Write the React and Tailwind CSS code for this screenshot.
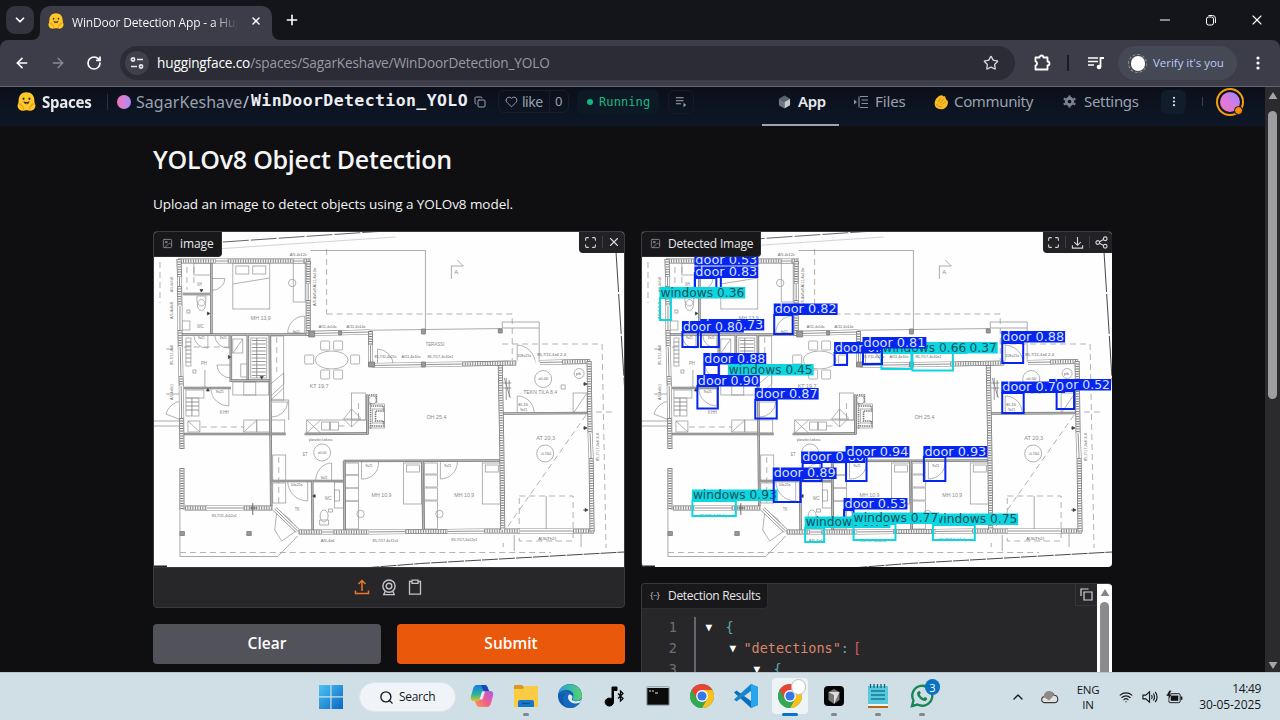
import React from "react";
import {
  ArrowLeft, ArrowRight, RotateCw, ChevronDown, ChevronUp, Plus, X, Minus, Star, Copy, Heart,
  Search, Wifi, Volume2, Share2, Maximize, Image as ImageIcon,
} from "lucide-react";

function Hugging({ className }) {
  return (
    <svg viewBox="0 0 20 20" className={className}>
      <path d="M10 .3c5.200 0 8.300 3.600 8.300 8.600 0 1.500.2 3.200 1 4.600.6 2.500-1.300 6.200-5 6.200-2 0-3-.5-4.300-.5s-2.300.5-4.300.5c-3.700 0-5.600-3.700-5-6.200.8-1.400 1-3.100 1-4.600C1.700 3.900 4.800.3 10 .3z" fill="#ffc927" />
      <path d="M1.500 12.500c2.500 0 5 2.500 5.500 6M18.500 12.500c-2.500 0-5 2.500-5.500 6M3.500 12l1.500 3M16.500 12l-1.500 3" stroke="#f39a1e" strokeWidth="1.300" fill="none" />
      <ellipse cx="6.900" cy="7.200" rx="1.100" ry="1.300" fill="#3b3a44" />
      <ellipse cx="13.100" cy="7.200" rx="1.100" ry="1.300" fill="#3b3a44" />
      <path d="M6.800 9.700q3.200 1.600 6.400 0q-.5 3.200-3.200 3.200t-3.200-3.200z" fill="#3b3a44" />
      <path d="M8.700 12.100q1.300-1 2.600 0l-1.300.7z" fill="#ef4e4e" />
    </svg>
  );
}

function Wall({ x1, y1, x2, y2, w = 5 }) {
  const p = { x1, y1, x2, y2 };
  return (
    <g>
      <line {...p} stroke="#777" strokeWidth={w} />
      <line {...p} stroke="#f4f4f4" strokeWidth={w - 1.6} />
      <line {...p} stroke="#7d7d7d" strokeWidth={w - 1.6} strokeDasharray="0.9 1.6" />
    </g>
  );
}
function Thin({ x1, y1, x2, y2, w = 2.6 }) {
  const p = { x1, y1, x2, y2 };
  return (
    <g>
      <line {...p} stroke="#777" strokeWidth={w} />
      <line {...p} stroke="#bbb" strokeWidth={w - 1.4} />
    </g>
  );
}
function Pane({ x1, y1, x2, y2 }) {
  const p = { x1, y1, x2, y2 };
  return (
    <g>
      <line {...p} stroke="#888" strokeWidth="5" />
      <line {...p} stroke="#fff" strokeWidth="3.800" />
      <line {...p} stroke="#888" strokeWidth="0.900" />
    </g>
  );
}

const walls = [
  [177, 261, 215, 261], [227, 261, 293, 261], [303, 261, 310, 261], [178, 259, 178.6, 277], [178.600, 286, 179, 306],
  [179, 330, 179.300, 347], [180, 376, 180.300, 386], [180.700, 418, 181, 449], [181, 468, 181, 510], [307.500, 261, 307.500, 284], [307.500, 300, 307.500, 336],
  [184, 508, 206, 508], [243, 508, 272, 508], [298, 532, 321, 532], [333, 532, 368, 532], [405, 531.5, 447, 531.5],
  [484, 531, 519, 531], [573, 531, 594, 531], [500, 365, 501.500, 445], [501.500, 445, 502.500, 530], [462, 364, 516, 363],
  [562, 362, 590, 361.5], [589, 361, 590, 433], [591, 458, 592, 532], [370, 331, 370, 345],
];
const panes = [
  [215, 261, 227, 261], [293, 261, 303, 261], [178.600, 277, 178.600, 286], [179, 306, 179, 330], [179.300, 347, 180, 376], [180.300, 386, 180.700, 418],
  [307.500, 284, 307.500, 300], [313, 333.5, 369, 332], [370, 345, 370, 366], [372, 365.500, 462, 364], [540, 362.5, 562, 362],
  [206, 508, 243, 508], [321, 532, 333, 532], [368, 532, 405, 531.5], [447, 531.5, 484, 531], [519, 531, 573, 531], [590, 433, 591, 458], [274, 509, 297, 531],
];
const thins = [
  [210.500, 263, 210.500, 334], [182, 294, 210, 294], [181, 334.500, 309, 334.500], [230, 335, 230, 382], [247, 335, 247, 380], [230, 380.500, 269, 380.500],
  [269, 335, 270.500, 506], [183, 388, 230, 388], [183, 434, 285, 434], [304, 434, 368, 433.500], [367, 395, 367, 434], [343, 461, 500, 460.500],
  [343.500, 461, 344, 530], [422, 461, 423, 530], [270, 481, 343, 481], [311.500, 481, 312, 530], [503, 413.500, 588, 413],
];
const rects = [
  [232, 263, 37, 46], [235, 266, 13, 8], [252, 266, 13, 8], [193, 263, 17, 12], [292.500, 263, 12, 39],
  [232, 339, 10, 14], [240, 364, 7, 13], [185, 338, 5, 28], [250, 338, 16, 40], [232, 382, 36, 13], [243, 382, 12, 13],
  [270, 336, 13, 64], [185, 390, 18, 8], [185, 398, 13, 18], [187, 421, 12, 11], [243, 420, 13, 12], [256, 420, 13, 12], [270, 420, 14, 13],
  [306, 420, 60, 13], [321, 422, 8, 8], [330, 422, 8, 8], [272, 455, 13, 26], [272, 483, 13, 20], [345, 463, 13, 12], [345, 475, 13, 13], [345, 488, 13, 13], [345, 501, 13, 28],
  [424, 463, 13, 11], [424, 475, 13, 12], [424, 488, 13, 12], [424, 501, 13, 28], [403, 463, 18, 41], [406, 465, 13, 7], [482, 463, 18, 41], [485, 465, 13, 7],
  [368, 404, 16, 24], [372, 409, 12, 14], [334, 482, 9, 26], [334, 490, 5, 11], [573, 393, 14, 20], [351, 393, 14, 27], [186, 310, 3, 3], [192, 370, 3, 3],
  [328, 509, 4, 3], [561, 385, 4, 4], [181, 321, 8, 9],
];
const chairs = [[320, 341], [333, 341], [304, 355], [350, 355], [320, 370], [333, 370]];
const arcs = [
  "M211 290.500A14 12 0 0 0 224 278.500H211", "M304 316A17 17 0 0 0 287 333H304V316", "M193 336A13 13 0 0 0 207 348V335", "M214 336A13 13 0 0 0 228 348V335",
  "M230 365H216A14 14 0 0 0 230 378z", "M210 389A18 18 0 0 0 228 406V389", "M271 402H287A16 16 0 0 1 271 417", "M377 366V349A17 17 0 0 1 393 365", "M517 363V345A19 19 0 0 1 535 363",
  "M315 481A16 18 0 0 1 331 463V481", "M287 482A20 20 0 0 0 307 501V482", "M361 462V479A16 16 0 0 0 378 462", "M440 462V479A17 17 0 0 0 457 462", "M276 512L274 530L281 541L294 532A24 20 0 0 0 276 512",
  "M517 413V396A17 17 0 0 1 534 413", "M574 412L587 393", "M180 401A18 18 0 0 0 165 414L180 420",
];
const labels = [
  ["MH 13,9", 250, 320, 20], ["TERASSI", 425, 346, 19], ["KT 19,7", 309, 388, 19], ["OH 25,4", 426, 419.500, 20], ["AT 20,3", 536, 440, 19], ["ET", 302, 456, 5],
  ["TK", 294, 511, 5], ["WC", 324, 500, 7], ["WC", 196, 328, 7], ["PH", 200, 365, 6], ["WH", 196, 286, 5], ["KHH", 219, 414, 9], ["MH 10,9", 371, 497, 20], ["MH 10,9", 454, 497, 20], ["TEKN TILA  8,4", 523, 394, 34], ["A", 454, 274, 4],
];
const tiny = [
  ["A/5.4x12x", 289, 256, 17], ["A/11,4x14x", 318, 328, 18], ["A/11,4x14x", 346, 328, 19], ["85,7/11,4x21x", 374, 358, 22], ["A/11,4x10x", 401, 358, 19], ["85,7/17,4x10x1", 427, 358, 26],
  ["108x21x", 517, 357, 14], ["85,7/11,4x6 2-4", 537, 356, 29], ["85,7/11,4x12x1", 211, 517, 25], ["A/5,4x6", 320, 542, 14], ["85,7/17,4x12x1", 372, 542, 26], ["85,7/17,4x12x1", 451, 541, 26], ["A(30Th2)", 538, 540, 18],
  ["9x21", 197, 339, 7], ["9x21", 219, 339, 7], ["9x21", 215, 393, 8], ["9x21", 292, 333, 7], ["9x21", 320, 479, 7], ["9x21", 365, 467, 7], ["9x21", 444, 467, 7], ["10x21x", 290, 486, 12], ["EI-15", 518, 406, 10], ["9x21", 520, 411, 7], ["±0.00", 317, 454, 9], ["±0.00", 538, 380, 10], ["-0.150", 540, 455, 11], ["pk", 576, 375, 5], ["ylänurkin korkeus", 308, 441.500, 24],
];
const vert = [["A/5.4x6x8", 172, 292, 15], ["A/5.4x6x8", 172, 319, 17], ["85.7/11,4x6", 172, 365, 20], ["A/5.4x6x1", 172, 400, 16], ["A/5.4x6x8 A/11.4x12x", 315, 306, 38], ["85,7/17,4x6 2-4", 599, 461, 28]];
const dashes = [
  "M326 249V314M326 314H512V360", "M502 344H602L606 548", "M179 552.500H551", "M186 267V290M193 267V285", "M159 262V303", "M183 347H230", "M276 337V372", "M200 427H243", "M338 426H345", "M278 457V503",
  "M586 415L505 530", "M519 496H573V541H519z", "M596 412H612", "M503 543V547", "M358 403V420",
];

function FloorPlan() {
  return (
    <g fill="none" stroke="#999" strokeWidth="0.750">
      <rect x="153" y="232" width="472" height="336" fill="#fefefe" stroke="none" />
      <path d="M215 249L395 237" stroke="#c4c4c4" />
      <path d="M310 250.500H425V331M311 331L502 328.500M502 328V322H539V362M502 328H539M451 279V266H463L457 260M179 510V556.500H277L297 536M165 349h6M165 394H180M153 421H181M153 426H181M546 496V530M514 535V551M581 534V547M204 370V388M270 400h18V420" stroke="#909090" />
      <path d="M222 242L385 231" stroke="#555" strokeWidth="0.900" strokeDasharray="26 2" />
      <path d="M616 252L624.500 386" stroke="#333" strokeWidth="0.900" strokeDasharray="40 2" />
      <path d="M363 568L420 563.500L624 552" stroke="#333" strokeWidth="0.900" strokeDasharray="16 1" />
      <path d="M153 565.500H166V567.500H153z" fill="#222" stroke="none" />
      {dashes.map((d, i) => <path key={i} d={d} strokeDasharray="6 4" />)}
      {rects.map((r, i) => <rect key={i} x={r[0]} y={r[1]} width={r[2]} height={r[3]} />)}
      {chairs.map((c, i) => <rect key={i} x={c[0]} y={c[1]} width="9" height="9" rx="1" />)}
      <ellipse cx="331" cy="360" rx="16.500" ry="9" fill="#fefefe" />
      <circle cx="291.500" cy="283" r="3.700" />
      <path d="M232 284L269 278M196 296h9v4a4.500 6 0 0 1-9 0z" />
      <ellipse cx="200.500" cy="305" rx="4" ry="5.500" />
      <ellipse cx="323.500" cy="516" rx="4" ry="6" /><path d="M319 520h9v5h-9z" />
      <circle cx="321.500" cy="452.500" r="8.500" /><circle cx="543" cy="379" r="8.500" /><circle cx="545" cy="453.500" r="8.500" /><circle cx="579" cy="373.500" r="5" />
      <circle cx="360" cy="514" r="3.700" /><circle cx="439" cy="514" r="3.700" /><circle cx="372" cy="400" r="4" />
      <path d="M343 419L351 409L360 418L351 427zM351 409V427M343 419H360M187 421L199 432M243 432L256 420M232 353L242 339M270 384L283 373V384L270 396M270 400L283 388M306 420L320 433M306 433L320 420" />
      <path d="M251 340.500H265M251 344H265M251 347.500H265M251 351H265M251 354.500H265M251 358H265M251 361.500H265M251 365H265M251 368.500H265M251 372H265M251 375.500H265M256 338V378M185 342h5M185 346h5M185 350h5M185 354h5M185 358h5M185 362h5M185 402h13M185 406h13M185 410h13M191 398v18M504 378l6 20M506 378v22M509 380v17M503 388h8M503 383h8" stroke="#777" />
      <path d="M370 403V429M370 406H383V411H375V421H383V426H370M366 395h10v8" stroke="#777" strokeWidth="1.600" strokeDasharray="1.400 .8" />
      {arcs.map((d, i) => <path key={i} d={d} />)}
      {thins.map((w, i) => <Thin key={i} x1={w[0]} y1={w[1]} x2={w[2]} y2={w[3]} />)}
      {panes.map((w, i) => <Pane key={i} x1={w[0]} y1={w[1]} x2={w[2]} y2={w[3]} />)}
      {walls.map((w, i) => <Wall key={i} x1={w[0]} y1={w[1]} x2={w[2]} y2={w[3]} />)}
      <path d="M517 363H535" stroke="#fff" strokeWidth="5" />
      <path d="M421 329h4v5h-4zM498 329h4v4h-4zM179 531.500h4.500v4h-4.500zM246 531.500h4.500v4h-4.500zM308 331h6v6h-6zM338 331h3v4h-3zM368 362h6v5h-6zM421 362h4v5h-4z" fill="#999" stroke="#777" />
      <path d="M209 313.500l-2.500-1.500v3zM230 357l-2.500-1.500v3zM200.500 292l-1.500-2.500h3zM207 388.500l-1.500 2.500h3zM261 379l-1.500-2.500h3zM587 384l-3-1.500v3zM587 428l-3-1.500v3zM588 510l-3-1.500v3zM312 496l2.500 1.500v-3zM252 503v12M249 508h7M583 384h3M583 428h3M583 510h4" fill="#333" stroke="#444" />
      <g fill="#8a8a8a" stroke="none" fontFamily="'Liberation Sans', sans-serif" fontSize="6.200">
        {labels.map(([t, x, y, w], i) => <text key={i} x={x} y={y} textLength={w} lengthAdjust="spacingAndGlyphs">{t}</text>)}
      </g>
      <g fill="#666" stroke="none" fontFamily="'Liberation Sans', sans-serif" fontSize="4.200">
        {tiny.map(([t, x, y, w], i) => <text key={i} x={x} y={y} textLength={w} lengthAdjust="spacingAndGlyphs">{t}</text>)}
        {vert.map(([t, x, y, w], i) => <text key={i} transform={`translate(${x} ${y}) rotate(-90)`} textLength={w} lengthAdjust="spacingAndGlyphs">{t}</text>)}
      </g>
    </g>
  );
}

const B = "#0625ee";
const C = "#0cd6e0";
/* kind, label, label x, label y, label width, then box x1 y1 x2 y2 */
const detections = [
  ["d", "door 0.53", 694.5, 254, 64, 695, 273, 721, 292],
  ["d", "door 0.83", 694.5, 266.5, 64, 695, 278, 716.5, 292],
  ["w", "windows 0.36", 659.5, 287, 86, 660, 298, 671, 320],
  ["d", "door 0.82", 774, 303.5, 64, 774.5, 315, 793, 334],
  ["d", "door 0.73", 700.5, 319, 64, 701, 332, 719, 347],
  ["d", "door 0.80", 682, 321, 62, 682.5, 332, 698, 347],
  ["d", "door 0.88", 703.5, 353, 63, 704.5, 365, 719, 375],
  ["w", "windows 0.45", 728, 364, 86, 0, 0, 0, 0],
  ["d", "door 0.90", 697, 375, 63, 697.5, 386, 718, 408.5],
  ["d", "door 0.87", 755, 388, 64, 755.5, 400, 777, 418.5],
  ["d", "door 0.84", 834.5, 342, 62, 835, 353, 847.5, 365],
  ["w", "windows 0.37", 912.5, 342, 86, 913, 353, 953.5, 370.5],
  ["w", "windows 0.66", 882, 342.5, 86, 882, 353, 912, 369],
  ["d", "door 0.81", 863, 337, 64, 863.5, 349, 882.5, 364],
  ["d", "door 0.88", 1002, 331, 64, 1003, 343, 1024, 363],
  ["d", "door 0.52", 1050, 379, 62, 1057.5, 391, 1075, 409],
  ["d", "door 0.70", 1002, 381.5, 64, 1003, 393, 1024.5, 413],
  ["w", "windows 0.93", 692, 489.5, 86, 692.5, 501, 736, 516],
  ["d", "door 0.86", 801.5, 451.5, 64, 803, 463, 822, 481],
  ["d", "door 0.89", 773, 467.5, 64, 774, 480, 801, 502],
  ["d", "door 0.94", 846, 446, 64, 846.5, 457, 867, 481],
  ["d", "door 0.93", 924, 446, 64, 924.5, 457, 946, 481],
  ["d", "door 0.53", 844, 498, 64, 844.5, 510, 854, 519],
  ["w", "windows 0.78", 805, 516.5, 86, 805.5, 528, 824.5, 542],
  ["w", "windows 0.75", 933, 513.5, 86, 933.5, 525, 975.5, 540],
  ["w", "windows 0.77", 853, 512.5, 87, 854, 524, 896, 540],
];

function Detections() {
  return (
    <g transform="translate(-489 0)" fontFamily="'DejaVu Sans', sans-serif" fontSize="11.800">
      {detections.map(([k, t, x, y, w, a, b, c, d], i) => (
        <g key={i}>
          {c > 0 && <rect x={a} y={b} width={c - a} height={d - b} fill="none" stroke={k === "d" ? B : C} strokeWidth="2" />}
          <rect x={x} y={y} width={w} height="11.500" fill={k === "d" ? B : C} />
          <text x={x + 1} y={y + 9.6} textLength={w - 2} lengthAdjust="spacingAndGlyphs" fill={k === "d" ? "#d8e0ff" : "#17505a"}>{t}</text>
        </g>
      ))}
    </g>
  );
}

function PlanImage({ detected }) {
  return (
    <svg viewBox="153 232 471 335" className="block h-[335px] w-full" preserveAspectRatio="none">
      <FloorPlan />
      {detected && <Detections />}
    </svg>
  );
}

function PanelLabel({ children }) {
  return (
    <div className="absolute left-0 top-0 flex h-[25px] items-center gap-[7px] rounded-br-sm border-b border-r border-[#2c2c31] bg-[#18181b] pl-[8px] pr-[7px] text-[12px] text-[#e8e8ea]">
      {children}
    </div>
  );
}

function Chrome({ className }) {
  return (
    <svg viewBox="0 0 24 24" className={className}>
      <circle cx="12" cy="12" r="12" fill="#34a853" />
      <path d="M12 12L1.610 6A12 12 0 0 1 22.390 6L12 6z" fill="#ea4335" />
      <path d="M12 6H22.390A12 12 0 0 1 12 24L17.200 15z" fill="#fbc11a" />
      <path d="M1.610 6L6.800 15L12 18L12 6z" fill="#ea4335" /><path d="M1.610 6L6.800 15A6 6 0 0 0 15.500 16.800L12 24A12 12 0 0 1 1.610 6z" fill="#34a853" />
      <circle cx="12" cy="12" r="5.900" fill="#fff" /><circle cx="12" cy="12" r="4.600" fill="#3377e8" />
    </svg>
  );
}

function TaskItem({ children, active, running }) {
  return (
    <div className="flex h-12 w-11 flex-col items-center">
      <div className={active ? "mt-[5px] flex h-9 w-9 items-center justify-center rounded bg-[#eef3f6]" : "mt-[5px] flex h-9 w-9 items-center justify-center"}>{children}</div>
      {active ? <div className="-mt-[1px] h-[3px] w-4 rounded-full bg-[#0a74c9]" /> : running ? <div className="-mt-px h-[3px] w-[6px] rounded-full bg-[#7e878d]" /> : null}
    </div>
  );
}

function Taskbar() {
  return (
    <div className="flex h-12 w-full border-t border-[#b9c5cb] bg-[#d0dfe6] pl-[317px] font-['Open_Sans',sans-serif] text-[#17191b]">
      <div className="flex h-12 w-7 items-center justify-center">
        <svg viewBox="0 0 24 24" className="h-6 w-6">
          <defs><linearGradient id="win" x1="0" y1="0" x2="1" y2="1"><stop offset="0" stopColor="#4cc4f5" /><stop offset="1" stopColor="#0a66c2" /></linearGradient></defs>
          <path d="M0 0H11.300V11.300H0zM12.500 0H24V11.300H12.500zM0 12.500H11.300V24H0zM12.500 12.500H24V24H12.500z" fill="url(#win)" />
        </svg>
      </div>
      <div className="ml-[14px] mr-1 mt-[9px] flex h-[30px] w-[97px] items-center rounded-full border border-[#dde5ea] bg-[#f0f4f8] pl-[19px]">
        <Search className="h-[15px] w-[15px]" strokeWidth={2.2} />
        <span className="ml-[5px] text-[12px] tracking-[-0.3px]">Search</span>
      </div>
      <TaskItem>
        <svg viewBox="0 0 24 24" className="h-6 w-6">
          <defs>
            <linearGradient id="cp1" x1="0" y1="0" x2="0" y2="1"><stop offset="0" stopColor="#1878e0" /><stop offset=".6" stopColor="#2bb59b" /><stop offset="1" stopColor="#e6c21c" /></linearGradient>
            <linearGradient id="cp2" x1="1" y1="0" x2="0" y2="1"><stop offset="0" stopColor="#a85bea" /><stop offset=".5" stopColor="#ee5c92" /><stop offset="1" stopColor="#fb9a4c" /></linearGradient>
          </defs>
          <path d="M7 1H15Q17 1 18 4L19 7H16Q14 7 13 10L11 17H4Q0 17 1 12L3 5Q4 1 7 1zM10 7L8 14" fill="url(#cp1)" />
          <path d="M17 23H9Q7 23 6 20L5 17H8Q10 17 11 14L13 7H20Q24 7 23 12L21 19Q20 23 17 23z" fill="url(#cp2)" />
          <path d="M9.500 15.500L12 7.500H15L12.500 15.500z" fill="#e5e8ef" />
          <path d="M11 1H15Q17 1 18 5L19 7H15Q13 7 12 3z" fill="#1647b8" />
        </svg>
      </TaskItem>
      <TaskItem running>
        <svg viewBox="0 0 24 24" className="h-6 w-6"><path d="M0 2q0-1 1-1h7l2 2v5H0z" fill="#d99a1d" /><path d="M0 5h9l2-3h12q1 0 1 1v20H0z" fill="#fbcb44" /><path d="M4 23v-5q0-2 2-2h12q2 0 2 2v5z" fill="#1777cc" /><path d="M8 19.500h8" stroke="#0b4f96" strokeWidth="1.200" /></svg>
      </TaskItem>
      <TaskItem>
        <svg viewBox="0 0 24 24" className="h-6 w-6">
          <defs><linearGradient id="ed" x1="0" y1="0" x2="1" y2="0"><stop offset="0" stopColor="#229fe0" /><stop offset="1" stopColor="#57d46b" /></linearGradient></defs>
          <circle cx="12" cy="12" r="12" fill="#0f5cac" />
          <path d="M.2 10A12 12 0 0 1 24 12C24 16 20 17.500 16 16.500C13.500 16 15.500 14.500 15.500 12C15.500 5 4 4 .2 10z" fill="url(#ed)" />
          <path d="M1 9.500C6 6 12 7 12 10C9 11 9 19 18 19.500L22 18.500A12 12 0 0 1 9 23.600C5 21 3 14 8 9.500z" fill="#1769bd" />
          <path d="M11 10.500C8 14 12 20 18 19.500C20 19.500 22 18.700 22.500 18L24 15C22 18 13 18 14 14.500C15.500 13 14 10 11 10.500z" fill="#dce9f0" />
        </svg>
      </TaskItem>
      <TaskItem>
        <svg viewBox="0 0 24 24" className="h-6 w-6"><path d="M10 3h5v3.500h-3.500v12a4.200 4 0 1 1-1.500-3.500z" fill="#050505" stroke="#050505" /><path d="M16 9.500l5 5-2.500 2.500V7l2.500 2.500-5 5" fill="none" stroke="#050505" strokeWidth="1.300" /></svg>
      </TaskItem>
      <TaskItem>
        <svg viewBox="0 0 24 24" className="h-6 w-6"><path d="M1 3H23V21H1z" fill="#0b0b0c" stroke="#747c80" /><path d="M1 3.500H23" stroke="#c9ced1" /><path d="M3 7h2M6 7h2M9 9h3" stroke="#e4e4e4" /></svg>
      </TaskItem>
      <TaskItem><Chrome className="h-6 w-6" /></TaskItem>
      <TaskItem>
        <svg viewBox="0 0 24 24" className="h-6 w-6"><path d="M17 0L24 3V21L17 24L0 8.500L2.500 6.500L17 17z" fill="#0a6fb8" /><path d="M17 7L2.500 17.500L0 15.500L17 0z" fill="#1685cf" /><path d="M17 0L24 3V21L17 24z" fill="#27a5ee" /></svg>
      </TaskItem>
      <TaskItem active>
        <div className="relative"><Chrome className="h-6 w-6" /><div className="absolute -right-[4px] -top-[5px] h-[16px] w-[15px] rounded-full border border-[#b9bcc0] bg-white" /></div>
      </TaskItem>
      <TaskItem running>
        <svg viewBox="0 0 24 24" className="h-6 w-6"><rect x="2" y="2" width="20" height="20" rx="4" fill="#050505" /><path d="M12 5l5.500 3v8l-5.500 4-5.500-4V8z" fill="#777" /><path d="M6.500 8h11l-5.500 12V11z" fill="#ddd" /></svg>
      </TaskItem>
      <TaskItem running>
        <svg viewBox="0 0 24 24" className="h-6 w-6"><path d="M2 2H22V22H2z" fill="#5ac8dc" /><path d="M2 21H22V24H2z" fill="#b96419" /><path d="M2 20H22V22H2z" fill="#eef8fa" /><path d="M5 7H19M5 11H19M5 15H19" stroke="#137b98" strokeWidth="1.400" /><path d="M4.500 0V4M8 0V4M11.500 0V4M15 0V4M18.500 0V4" stroke="#17627c" strokeWidth="1.300" /></svg>
      </TaskItem>
      <TaskItem running>
        <div className="relative">
          <svg viewBox="0 0 24 24" className="h-6 w-6"><path d="M2 22L3.500 16.500A10 10 0 1 1 7.500 20.500z" fill="none" stroke="#178654" strokeWidth="2.400" /><path d="M8 7.500Q6 9 8 12.500Q11.500 17 15.500 17Q18 15.500 17 14L14.800 13L13.500 14.200Q10.500 12.500 9.800 10.500L10.800 9L9.800 7z" fill="#178654" /></svg>
          <div className="absolute -right-[6px] -top-[5px] flex h-[16px] w-[15px] items-center justify-center rounded-full bg-[#0c72c4] text-[11px] leading-none text-white">3</div>
        </div>
      </TaskItem>
      <div className="ml-[60px] flex w-7 items-center justify-center"><ChevronUp className="h-4 w-4" strokeWidth={2} /></div>
      <div className="ml-1 flex w-7 items-center justify-center">
        <svg viewBox="0 0 20 16" className="h-[14px] w-[18px]"><path d="M4 14.500a3.500 3.500 0 0 1 0-7A5.500 5.500 0 0 1 14.500 6a4.300 4.300 0 0 1 1 8.500z" fill="#e6e1dd" stroke="#36393c" strokeWidth="1.300" /><path d="M3 8A5.500 5.500 0 0 1 14.500 6L9 12z" fill="#8d8a88" /></svg>
      </div>
      <div className="ml-1 flex w-10 flex-col items-center justify-center text-[11.5px] leading-[15px] tracking-[-0.3px]"><span>ENG</span><span>IN</span></div>
      <div className="ml-[6px] flex w-6 items-center justify-center"><Wifi className="h-[14px] w-[14px]" /></div>
      <div className="flex w-6 items-center justify-center">
        <svg viewBox="0 0 18 16" className="h-4 w-[17px]" fill="none" stroke="#17191b" strokeWidth="1.200"><path d="M1 6H4L8 2.500V13.500L4 10H1zM10 6Q11.500 8 10 10M12 4.300Q14.500 8 12 11.700M14 2.500Q18 8 14 13.500" /></svg>
      </div>
      <div className="flex w-6 items-center justify-center">
        <svg viewBox="0 0 18 14" className="h-[14px] w-[17px]"><rect x="3" y="3.500" width="12" height="9.500" rx="1.500" fill="none" stroke="#111" /><rect x="5" y="5.500" width="8" height="5.500" fill="#111" /><path d="M16.500 6.500v3.500" stroke="#111" strokeWidth="1.600" /><path d="M3.500 0L0 6h3l-1 5 4.500-7H4L6 0z" fill="#111" stroke="#d0dfe6" strokeWidth=".5" /></svg>
      </div>
      <div className="ml-auto flex flex-col items-end justify-center pr-[19px] text-[12px] leading-4 tracking-[-0.08px]"><span className="tracking-[-0.35px]">14:49</span><span>30-05-2025</span></div>
    </div>
  );
}

function BrowserChrome() {
  return (
    <div className="font-['Open_Sans',sans-serif]">
      <div className="flex h-10 items-start bg-[#14151a] pl-[6px]">
        <div className="mt-[6px] flex h-7 w-7 items-center justify-center rounded-[9px] bg-[#33343e]"><ChevronDown className="h-[14px] w-[14px] text-white" strokeWidth={3} /></div>
        <svg viewBox="0 0 8 8" className="ml-[-2px] h-2 w-2 self-end"><path d="M8 0V8H0A8 8 0 0 0 8 0z" fill="#3c3d49" /></svg>
        <div className="mt-[6px] flex h-[34px] w-[232px] items-center rounded-t-[10px] bg-[#3c3d49] pb-1 pl-2">
          <Hugging className="h-4 w-4 shrink-0" />
          <div className="ml-2 mt-[3px] w-[166px] overflow-hidden whitespace-nowrap bg-gradient-to-r from-white from-85% to-transparent bg-clip-text text-[12px] leading-5 tracking-[-0.18px] text-transparent">WinDoor Detection App - a Hug</div>
          <X className="ml-[12px] h-3 w-3 text-white" strokeWidth={3} />
        </div>
        <svg viewBox="0 0 8 8" className="h-2 w-2 self-end"><path d="M0 0V8H8A8 8 0 0 1 0 0z" fill="#3c3d49" /></svg>
        <Plus className="ml-[4px] mt-[12px] h-4 w-4 text-white" strokeWidth={2.4} />
        <div className="ml-auto mt-3 flex items-center text-white">
          <Minus className="h-4 w-4" strokeWidth={1.5} />
          <svg viewBox="0 0 16 16" className="ml-[30px] h-4 w-4"><rect x="3.500" y="5" width="7" height="8" rx="2" fill="none" stroke="#fff" /><path d="M5.500 3.500h4q3 0 3 3V11" fill="none" stroke="#fff" /></svg>
          <X className="ml-[30px] mr-[15px] h-4 w-4" strokeWidth={1.7} />
        </div>
      </div>
      <div className="bg-[#14151a]">
        <div className="flex h-[47px] items-center rounded-t-lg border-b border-[#64656e] bg-[#3c3d49] pl-[14px] text-white">
          <ArrowLeft className="h-4 w-4" strokeWidth={2.4} />
          <ArrowRight className="ml-5 h-4 w-4 text-[#8b8c95]" strokeWidth={2} />
          <RotateCw className="ml-5 h-4 w-4" strokeWidth={2.5} />
          <div className="ml-[18px] flex h-[34px] w-[895px] items-center rounded-full bg-[#2b2c35] pl-[5px]">
            <div className="flex h-6 w-6 items-center justify-center rounded-full bg-[#3f404c]">
              <svg viewBox="0 0 14 12" className="h-3 w-[14px]" fill="none" stroke="#e6e6ea" strokeWidth="1.700"><circle cx="3" cy="2.500" r="1.600" /><path d="M7 2.500h6M1 9.500h6" /><circle cx="11" cy="9.500" r="1.600" /></svg>
            </div>
            <div className="ml-2 mt-px whitespace-nowrap text-[13.6px] tracking-[-0.14px] text-[#989aa3]"><span className="text-white">huggingface.co</span>/spaces/SagarKeshave/WinDoorDetection_YOLO</div>
            <Star className="ml-auto mr-4 h-4 w-4 text-[#d5d6da]" />
          </div>
          <svg viewBox="0 0 20 20" className="ml-[17px] h-5 w-5" fill="none" stroke="#fff" strokeWidth="1.800"><path d="M3.500 4.500H7.500A2 2 0 0 1 11.500 4.500H15.500V8.500A2 2 0 0 1 15.500 12.500V16.500H3.500V12.500A2.200 2.200 0 0 0 3.500 8.300z" strokeLinejoin="round" /></svg>
          <div className="ml-[15px] h-4 w-[2px] bg-[#1c1d24]" />
          <svg viewBox="0 0 18 16" className="ml-[18px] h-4 w-[18px]"><path d="M1 3h10M1 6.500h10M1 10h6" stroke="#fff" strokeWidth="1.700" /><path d="M13.500 12V3h3.500" stroke="#fff" strokeWidth="1.800" fill="none" /><circle cx="12" cy="12" r="2.300" fill="#fff" /></svg>
          <div className="ml-[13px] flex h-[34px] w-[119px] items-center rounded-full bg-[#454855] pl-[10px] text-[11.5px] tracking-[-0.03px] text-[#b9cbf3]">
            <span className="mr-[6px] flex h-[19px] w-[19px] shrink-0 items-center justify-center rounded-full border border-dashed border-[#9b9da5]"><span className="h-[15px] w-[14px] rounded-full bg-white" /></span>
            <span className="whitespace-nowrap">Verify it's you</span>
          </div>
          <svg viewBox="0 0 4 16" className="ml-[19px] h-4 w-1" fill="#fff"><circle cx="2" cy="3" r="1.600" /><circle cx="2" cy="8" r="1.600" /><circle cx="2" cy="13" r="1.600" /></svg>
        </div>
      </div>
    </div>
  );
}

function SpaceHeader() {
  return (
    <div className="flex h-[39px] items-start overflow-hidden whitespace-nowrap bg-gradient-to-b from-[#0b0f19] to-[#0e1728] font-['Noto_Sans',sans-serif] text-[15px] text-[#9aa1ad]">
      <div className="flex h-[29px] w-full items-center">
        <Hugging className="ml-[17px] h-[19px] w-[19px] shrink-0" />
        <div className="ml-[6px] w-[65px] text-[16px] font-bold tracking-[-0.25px] text-[#e8eaee]"><span className="inline-block origin-left scale-x-[0.94]">Spaces</span></div>
        <div className="h-4 w-px bg-[#2a303c]" />
        <div className="ml-[9px] h-[14px] w-[14px] rounded-full bg-gradient-to-r from-[#f472b6] to-[#a78bfa]" />
        <div className="ml-[5px] w-[107px] text-[16px] tracking-[0.05px]">SagarKeshave</div>
        <div className="w-[8px] text-[16px] text-[#c3c7ce]">/</div>
        <div className="w-[222px] font-['DejaVu_Sans_Mono',monospace] text-[16.5px] font-bold tracking-[0.4px] text-[#eceef2]">WinDoorDetection_YOLO</div>
        <Copy className="ml-px h-3 w-3" strokeWidth={2} />
        <div className="ml-[12px] flex h-[23px] w-[71px] items-center rounded-md border border-[#171d29] text-[14px]">
          <Heart className="ml-[6px] h-[13px] w-[13px]" strokeWidth={1.8} /><span className="ml-[4px] w-[27px] tracking-[-0.5px]">like</span>
          <span className="flex h-[22px] items-center border-l border-[#171d29] pl-[5px] text-[13px]">0</span>
        </div>
        <div className="ml-[8px] flex h-[24px] w-[82px] items-center rounded-md bg-[#0d1a26] pl-[10px] font-['DejaVu_Sans_Mono',monospace] text-[12px] tracking-[0.1px] text-[#1fb681]">
          <span className="mr-[6px] h-[6px] w-[6px] rounded-full bg-[#10b981]" />Running
        </div>
        <div className="ml-[9px] flex h-[24px] w-[26px] items-center justify-center rounded-md border border-[#151b27]">
          <svg viewBox="0 0 14 14" className="h-3 w-3" stroke="#a4a9b3" strokeWidth="1.300" fill="none"><path d="M1 2h9M1 5.500h9M1 9h6" /><path d="M10 8v5l3-2.500z" fill="#a4a9b3" stroke="none" /></svg>
        </div>
        <svg viewBox="0 0 14 14" className="ml-[84px] h-[14px] w-[13px]"><path d="M7 0L13 3.500L7 7L1 3.500z" fill="#5c6470" /><path d="M1 3.500L7 7V14L1 10.500z" fill="#707782" /><path d="M13 3.500L7 7V14L13 10.500z" fill="#c3c7ce" /></svg>
        <div className="ml-[7px] w-[56px] font-semibold tracking-[-0.4px] text-[#e8eaee]">App</div>
        <svg viewBox="0 0 14 14" className="h-[14px] w-[14px]" stroke="#8b929e" strokeWidth="1.100" fill="none"><path d="M6 1.500h8M7.500 5h6.500M7.500 8.500h6.500M6 12.500h8M5 1.500v11" /><path d="M0 4.500l3 2.500-3 2.500z" fill="#8b929e" stroke="none" /></svg>
        <div className="ml-[7px] w-[58px] tracking-[-0.1px]">Files</div>
        <svg viewBox="0 0 16 16" className="h-4 w-4"><path d="M2 7Q1 11 3 13.500Q6 16 10.500 15Q15 13 15 8Q14.500 6 13.500 6L12 2.500Q11 1.500 10.500 2.500Q9 .5 8 1.500Q6 1 5 3Q3 4 2 7z" fill="#f9bd24" /><path d="M5 8L8 3.500M7 9.500L11 4.500M9.500 10.500L13 7M3 10Q5 13 9 13" stroke="#df8718" fill="none" /></svg>
        <div className="ml-[5px] w-[109px] tracking-[-0.35px]">Community</div>
        <svg viewBox="0 0 14 14" className="h-[13px] w-[13px]"><circle cx="7" cy="7" r="3.500" fill="none" stroke="#7c838f" strokeWidth="3" /><g stroke="#7c838f" strokeWidth="2.400"><path d="M7 .5v2M7 11.500v2M.8 3.800l2 1M11.300 9.200l2 1M.8 10.200l2-1M11.300 4.800l2-1" /></g></svg>
        <div className="ml-[8px] w-[77px] tracking-[-0.3px]">Settings</div>
        <div className="flex h-6 w-[25px] items-center justify-center rounded-md bg-[#111d2a]"><svg viewBox="0 0 4 12" className="h-[11px] w-1" fill="#e5e7eb"><circle cx="2" cy="2" r="1.200" /><circle cx="2" cy="6" r="1.200" /><circle cx="2" cy="10" r="1.200" /></svg></div>
        <div className="ml-[16px] h-[9px] w-px bg-[#3a414d]" />
        <div className="relative ml-[13px] h-7 w-7 shrink-0 rounded-full border-2 border-[#f59e0b] p-[2px]">
          <div className="h-full w-full rounded-full bg-gradient-to-tr from-[#f472b6] via-[#d67be0] to-[#9c83fa]" />
          <span className="absolute -bottom-px -right-px h-[9px] w-[9px] rounded-full border border-[#0e1728] bg-[#fb8c0b]" />
        </div>
      </div>
    </div>
  );
}

export default function App() {
  return (
    <div className="flex h-[720px] w-[1280px] flex-col overflow-hidden bg-[#0f0f11]">
      <BrowserChrome />
      <div className="flex h-[585px] min-h-0">
        <div className="flex w-[1265px] flex-col">
          <SpaceHeader />
          <div className="-mt-[2px] ml-[762px] h-[2px] w-[77px] bg-[#a0a5ae]" />
          <div className="overflow-hidden pl-[153px] font-['Open_Sans',sans-serif] text-[#f4f4f5]">
            <h1 className="mt-[16px] h-[34px] whitespace-nowrap text-[25px] font-semibold leading-[34px] tracking-[-0.25px]">YOLOv8 Object Detection</h1>
            <p className="mt-[18px] h-5 whitespace-nowrap text-[13.5px] leading-5 tracking-[-0.06px]">Upload an image to detect objects using a YOLOv8 model.</p>
            <div className="mt-[17px] flex gap-4">
              <div className="w-[472px]">
                <div className="relative h-[377px] overflow-hidden rounded-[4px] border border-[#3a3a40] bg-[#27272a]">
                  <PlanImage />
                  <PanelLabel><ImageIcon className="h-[11px] w-[11px] text-[#a1a1aa]" strokeWidth={1.6} /><span className="whitespace-nowrap tracking-[-0.1px]">image</span></PanelLabel>
                  <div className="absolute right-0 top-0 flex h-[21px] w-[45px] items-center rounded-bl-sm bg-[#222226] pl-[5px] text-[#d6d6da]">
                    <Maximize className="h-[13px] w-[13px]" strokeWidth={2} /><div className="mx-[5px] h-3 w-px bg-[#3f3f46]" /><X className="-ml-px h-[14px] w-[14px]" strokeWidth={2} />
                  </div>
                  <div className="flex h-10 items-center justify-center gap-[11px] border-t border-[#35353a] pr-[2px] text-[#c4c4ca]">
                    <svg viewBox="0 0 16 16" className="h-4 w-4" fill="none" stroke="#f0762b" strokeWidth="1.500"><path d="M8 12V2M4.500 5L8 1.500L11.500 5M1.500 11.500V14.500H14.500V11.500" /></svg>
                    <svg viewBox="0 0 16 18" className="h-[17px] w-4" fill="none" stroke="currentColor" strokeWidth="1.500"><circle cx="8" cy="7.500" r="6.500" /><circle cx="8" cy="7.500" r="3" /><path d="M4 13L2.500 16.500H13.500L12 13" /></svg>
                    <svg viewBox="0 0 14 16" className="h-4 w-[14px]" fill="none" stroke="currentColor" strokeWidth="1.300"><path d="M4 2.500H1.500V15.200H12.500V2.500H10M4 1.200H10V4.300H4z" /></svg>
                  </div>
                </div>
                <div className="mt-4 flex gap-4 text-[15.5px] font-semibold text-white">
                  <div className="flex h-10 w-[228px] items-center justify-center rounded-[4px] bg-[#52525b]">Clear</div>
                  <div className="flex h-10 w-[228px] items-center justify-center rounded-[4px] bg-[#ea580c]">Submit</div>
                </div>
              </div>
              <div className="w-[471px]">
                <div className="relative h-[336px] overflow-hidden rounded-[4px] border-l border-t border-[#3a3a40]">
                  <PlanImage detected />
                  <PanelLabel><ImageIcon className="h-[11px] w-[11px] text-[#a1a1aa]" strokeWidth={1.6} /><span className="whitespace-nowrap tracking-[-0.2px]">Detected Image</span></PanelLabel>
                  <div className="absolute right-0 top-0 flex h-[21px] w-[69px] items-center rounded-bl-sm bg-[#222226] pl-[4px] text-[#d6d6da]">
                    <Maximize className="h-[13px] w-[13px]" strokeWidth={2} /><div className="mx-[5px] h-3 w-px bg-[#3f3f46]" />
                    <svg viewBox="0 0 14 14" className="h-[13px] w-[13px]" fill="none" stroke="currentColor" strokeWidth="1.200"><path d="M7 1V10M3.500 6.500L7 10L10.500 6.500M1.500 10V13H12.500V10" /></svg>
                    <div className="mx-[5px] h-3 w-px bg-[#3f3f46]" />
                    <svg viewBox="0 0 14 14" className="h-[13px] w-[13px]" fill="none" stroke="currentColor" strokeWidth="1.200"><circle cx="3" cy="7" r="2" /><circle cx="11" cy="3" r="2" /><circle cx="11" cy="11" r="2" /><path d="M4.800 6.100L9.200 3.900M4.800 7.900L9.200 10.100" /></svg>
                  </div>
                </div>
                <div className="relative mt-4 flex h-[96px] overflow-hidden rounded-t-[4px] border-l border-t border-[#38383d] bg-[#27272a]">
                  <PanelLabel><span className="w-[11px] text-[9px] tracking-[-0.5px] text-[#c4c4ca]">{"{··}"}</span><span className="whitespace-nowrap tracking-[-0.3px]">Detection Results</span></PanelLabel>
                  <div className="mt-[33px] flex-1 font-['DejaVu_Sans_Mono',monospace] text-[13.5px] leading-[21px]">
                    <div className="flex">
                      <div className="w-[52px] pr-[17px] text-right text-[#6f6f78]"><div>1</div><div>2</div><div>3</div></div>
                      <div className="w-[1.5px] bg-[#66666f]" />
                      <div className="pl-[10px] text-[#5fa8a8]">
                        <div className="flex"><span className="w-[20px] text-[11px] text-white">▼</span><span>{"{"}</span></div>
                        <div className="flex pl-6"><span className="w-[14px] text-[11px] text-white">▼</span><span className="whitespace-pre tracking-[-0.02px]"><span className="text-[#dd8668]">"detections"</span>:</span><span className="ml-[4px] text-[#d25a5a]">[</span></div>
                        <div className="flex pl-12"><span className="w-[20px] text-[11px] text-white">▼</span><span>{"{"}</span></div>
                      </div>
                    </div>
                  </div>
                  <div className="flex h-[22px] w-[22px] items-center justify-center border-b border-l border-[#35353a]">
                    <svg viewBox="0 0 13 13" className="h-[13px] w-[13px]" fill="none" stroke="#d4d4d8" strokeWidth="1.200"><path d="M1 8V1H8.500M4 4H12V12H4z" /></svg>
                  </div>
                  <div className="flex w-[15px] flex-col items-center bg-white">
                    <svg viewBox="0 0 10 8" className="mt-[5px] h-[7px] w-[10px] shrink-0"><path d="M5 0L10 8H0z" fill="#858585" /></svg>
                    <div className="mt-[6px] h-[90px] w-[9px] shrink-0 rounded-full bg-[#8b8b8b]" />
                  </div>
                </div>
              </div>
            </div>
          </div>
        </div>
        <div className="flex w-[15px] flex-col items-center bg-[#2b2b2d]">
          <svg viewBox="0 0 10 8" className="mt-[5px] h-[7px] w-[10px]"><path d="M5 0L10 8H0z" fill="#a5a5a8" /></svg>
          <div className="mt-[12px] h-[288px] w-[9px] rounded-full bg-[#9e9ea0]" />
          <svg viewBox="0 0 10 8" className="mb-[3px] mt-auto h-[7px] w-[10px]"><path d="M5 8L10 0H0z" fill="#a5a5a8" /></svg>
        </div>
      </div>
      <Taskbar />
    </div>
  );
}
